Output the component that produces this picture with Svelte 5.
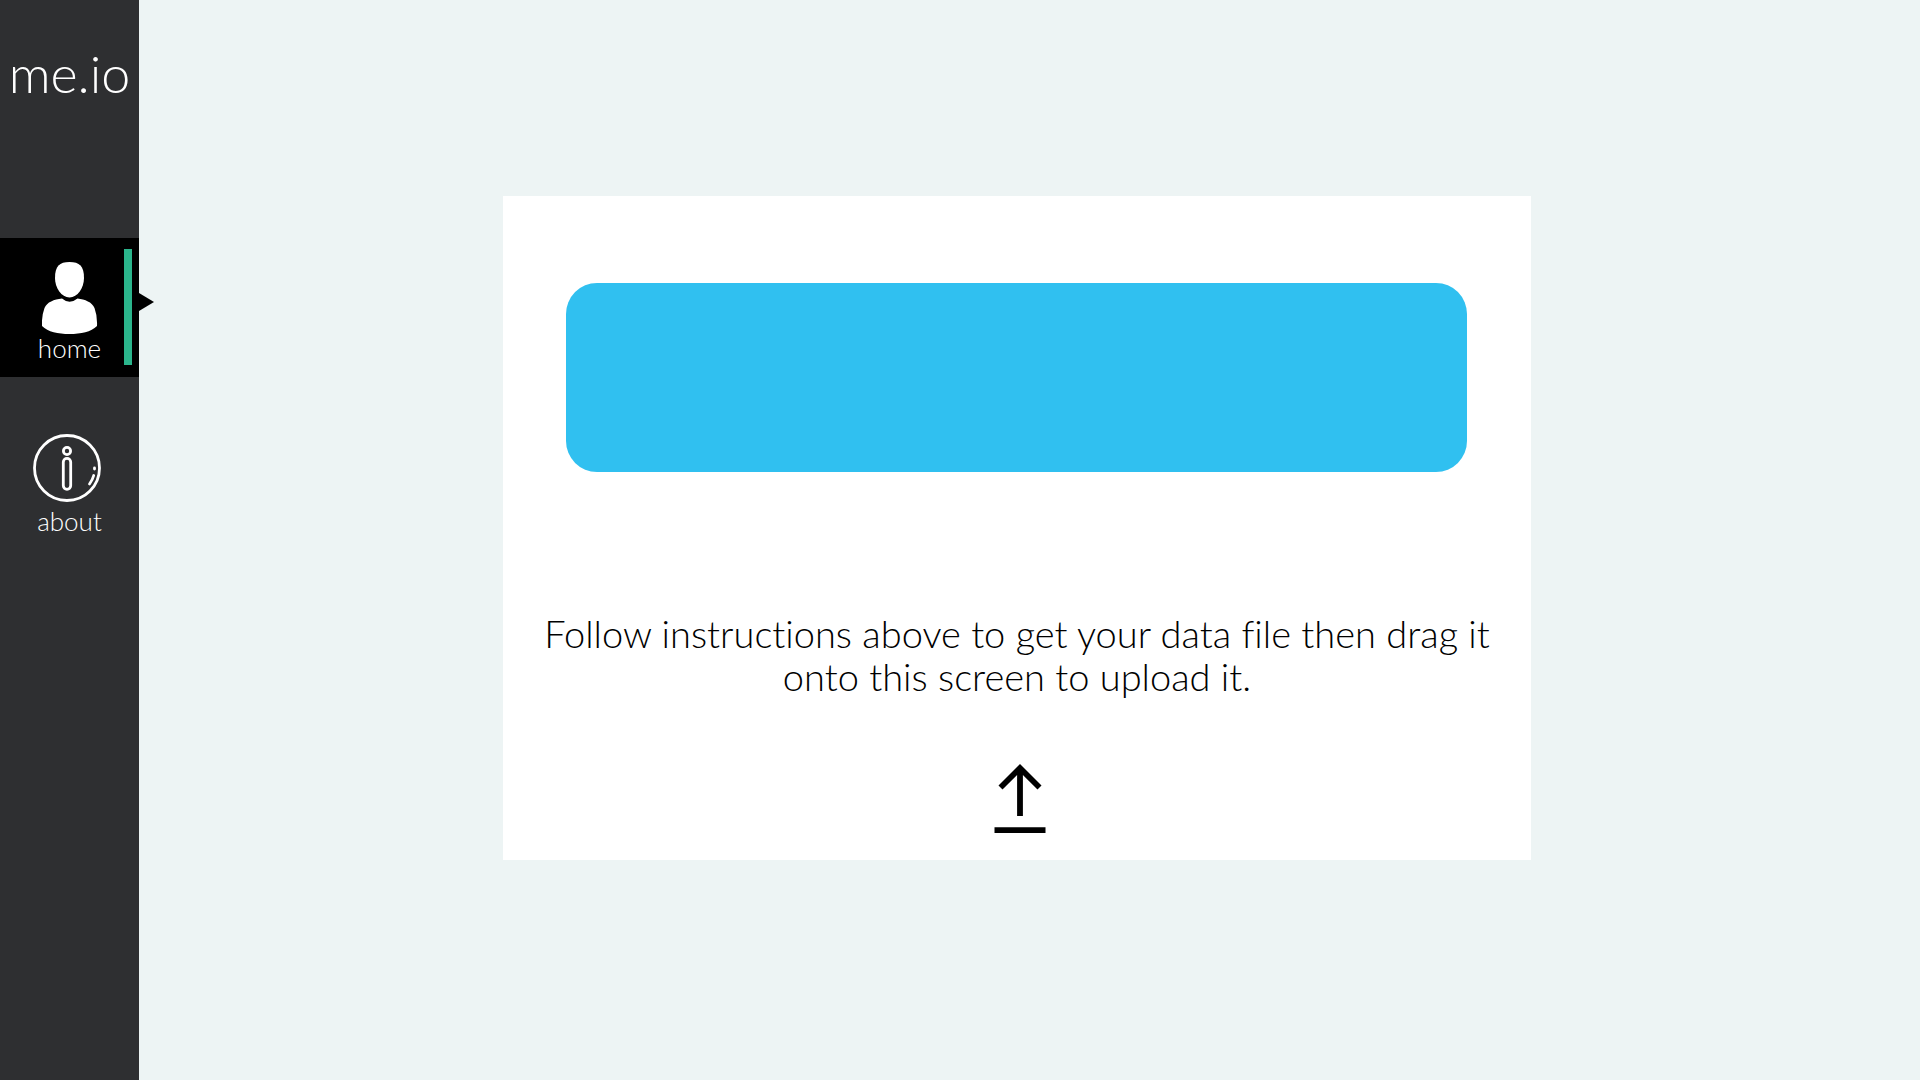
<script>
  let dragging = $state(false);
</script>

<div class="app">
  <aside class="sidebar">
    <h1 class="brand">me.io</h1>
    <nav>
      <a class="item active" href="#home" aria-current="page">
        <svg width="56" height="74" viewBox="0 0 56 74" aria-hidden="true">
          <path fill="#fff" d="M27.500 0C37.500 0 42 4 42 16C42 26 35.500 35.500 27.500 35.500S13 26 13 16C13 4 17.500 0 27.500 0Z" />
          <path fill="#fff" d="M20 36.500Q27.500 43 35.500 36.500C43 37.500 50 40 52.500 46Q55.500 54 55 64C49 70 39 72 27.500 72S6 70 0 64Q-.500 54 2.500 46C5 40 12 37.500 20 36.500Z" />
        </svg>
        <span>home</span>
      </a>
      <a class="item" href="#about">
        <svg class="info" width="68" height="68" viewBox="0 0 68 68" fill="none" stroke="#fff" stroke-width="2.800" aria-hidden="true">
          <circle cx="34" cy="34" r="32.500" />
          <circle cx="34" cy="17" r="3.600" />
          <rect x="30.300" y="24.300" width="7.400" height="31" rx="3.700" />
          <path stroke-linecap="round" d="M61.500 34v1M60.700 41.500Q59.500 46 56.500 50" />
        </svg>
        <span>about</span>
      </a>
    </nav>
  </aside>

  <main>
    <section
      class="card"
      aria-label="Upload data file"
      ondragover={(e) => { e.preventDefault(); dragging = true; }}
      ondragleave={() => (dragging = false)}
      ondrop={(e) => { e.preventDefault(); dragging = false; }}
      class:dragging
    >
      <div class="banner"></div>
      <p>Follow instructions above to get your data file then drag it onto this screen to upload it.</p>
      <svg class="upload" width="52" height="70" viewBox="0 0 52 70" aria-hidden="true">
        <path d="M26 0L47.500 21.500L43.500 25.500L28.900 10.900V52H23.100V10.900L8.500 25.500L4.500 21.500ZM.5 63.200H51.500V69H.5Z" />
      </svg>
    </section>
  </main>
</div>

<style>
  :global(body) {
    margin: 0;
  }
  .app {
    display: flex;
    min-height: 100vh;
    background: #edf4f4;
    font-family: Lato, "Open Sans", sans-serif;
    font-weight: 300;
    font-variant-ligatures: none;
  }
  .sidebar {
    flex: none;
    width: 139px;
    background: #2e2f31;
    color: #fff;
  }
  .brand {
    margin: 0;
    padding-top: 43px;
    height: 195px;
    font-size: 52px;
    line-height: 60px;
    font-weight: 300;
    text-align: center;
  }
  nav {
    display: flex;
    flex-direction: column;
    gap: 34px;
  }
  .item {
    position: relative;
    box-sizing: border-box;
    height: 139px;
    padding-top: 23px;
    display: flex;
    flex-direction: column;
    align-items: center;
    color: #fff;
    font-size: 26px;
    line-height: 28px;
    text-decoration: none;
  }
  .info {
    margin-right: 5px;
    margin-bottom: 5px;
  }
  .active {
    padding-top: 24px;
    background: #000;
  }
  .active span {
    margin-top: -2px;
  }
  .active::before {
    content: "";
    position: absolute;
    top: 11px;
    bottom: 12px;
    right: 7px;
    width: 8px;
    background: #2bb58c;
  }
  .active::after {
    content: "";
    position: absolute;
    top: 55px;
    left: 100%;
    width: 15px;
    height: 18px;
    background: #000;
    clip-path: polygon(0 0, 100% 50%, 0 100%);
  }
  main {
    flex: 1;
    padding: 196px 25px 0 0;
  }
  .card {
    box-sizing: border-box;
    max-width: 1028px;
    margin: 0 auto;
    padding: 87px 32px 26px;
    background: #fff;
    text-align: center;
  }
  .dragging {
    outline: 2px dashed #30c0f0;
  }
  .banner {
    height: 189px;
    margin: 0 32px 0 31px;
    border-radius: 31px;
    background: #30c0f0;
  }
  p {
    margin: 140px 0 66px;
    color: #000;
    font-size: 38px;
    line-height: 43px;
  }
  .upload {
    display: block;
    margin: 0 auto;
    padding-left: 6px;
  }
</style>
